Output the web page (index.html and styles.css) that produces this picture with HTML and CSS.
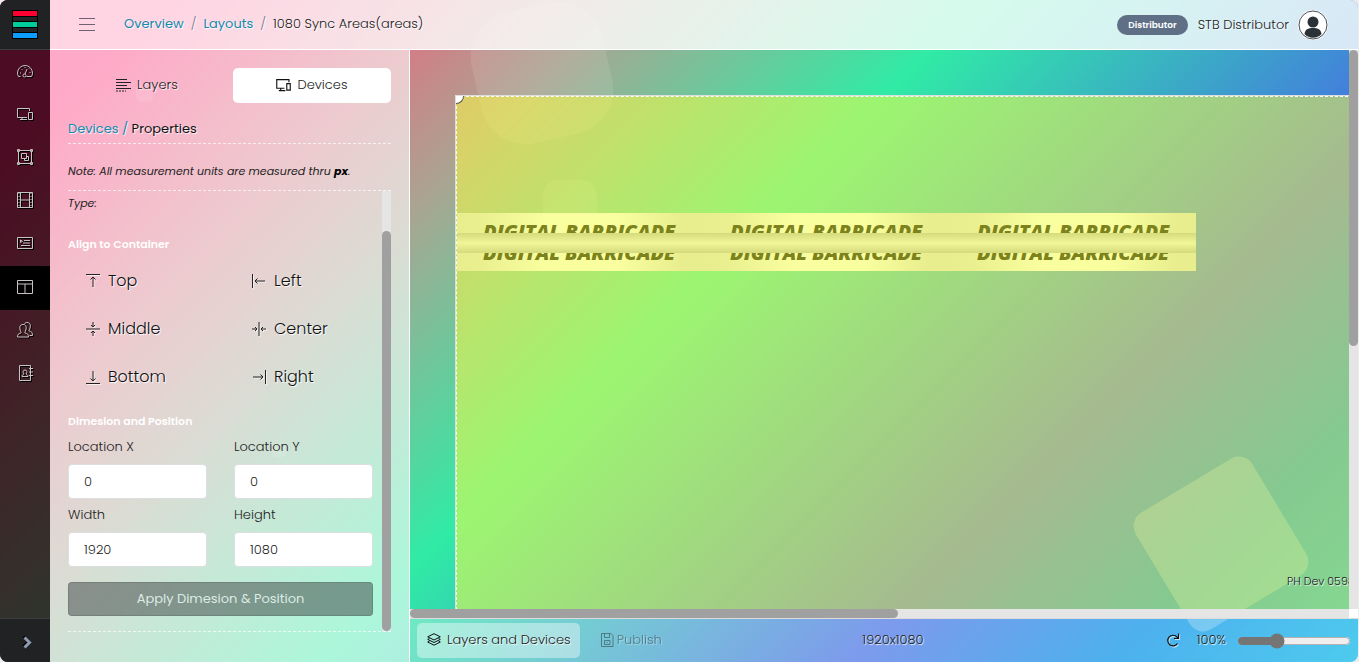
FILE: index.html
```html
<!DOCTYPE html>
<html lang="en">
<head>
<meta charset="utf-8">
<title>1080 Sync Areas(areas)</title>
<link rel="stylesheet" href="styles.css">
</head>
<body>
<div class="app">
  <div class="blobs" aria-hidden="true">
    <span class="blob blob-large"></span>
    <span class="blob blob-small"></span>
    <span class="blob blob-tilted"></span>
    <span class="blob blob-dot"></span>
    <span class="blob blob-dot-low"></span>
  </div>

  <aside class="sidebar">
    <a class="logo" href="#" aria-label="Home">
      <svg width="26" height="29" viewBox="0 0 26 29"><path fill="#000" d="M0 0h26v29H0z"/><path fill="#222426" d="M1 7h24v4H1zM1 18h24v4H1z"/><path fill="#ff0030" d="M1 1h24v5H1z"/><path fill="#00cc9c" d="M1 12h24v5H1z"/><path fill="#0a9dff" d="M1 23h24v5H1z"/></svg>
    </a>
    <nav class="nav">
      <a href="#" aria-label="Dashboard"><svg class="ico" viewBox="0 0 16 16"><path d="M3.5 13.5h-2c-.6-1-1-2.200-1-3.500a7.500 7.500 0 0 1 15 0c0 1.300-.4 2.500-1 3.500h-5"/><circle cx="7.500" cy="12.500" r="1.500"/><path d="M8 11l2-5M3 10h1M4.500 6l.8.8M8 4v1M12.500 9.500h1M11.500 6l.5-.5"/></svg></a>
      <a href="#" aria-label="Devices"><svg class="ico" viewBox="0 0 16 16"><path d="M10 11.500H.5v-9h12V5M5 11.500v2h4M3 13.500h7M11.500 6.500h4v7h-4z"/></svg></a>
      <a href="#" aria-label="Groups"><svg class="ico" viewBox="0 0 16 16"><path d="M1.500 1.500h13v13h-13zM4.500 4.500h5v5h-5zM9.500 7.500h2v4h-4v-2"/><path d="M.5.5h2v2h-2zM13.500.5h2v2h-2zM.5 13.500h2v2h-2zM13.500 13.500h2v2h-2z"/></svg></a>
      <a href="#" aria-label="Media"><svg class="ico" viewBox="0 0 16 16"><path d="M.5.5h15v15H.5zM3.500.5v15M12.500.5v15M3.500 8h9"/><path stroke-dasharray="1 2" d="M2 1v14M14 1v14"/></svg></a>
      <a href="#" aria-label="Playlists"><svg class="ico" viewBox="0 0 16 16"><path d="M.5 2.500h15v11H.5zM7 5.500h6M6 8h7M4 10.500h9M3.500 5v2.500l2-1.200z"/></svg></a>
      <a class="active" href="#" aria-label="Layouts"><svg class="ico" viewBox="0 0 16 16"><path d="M.5 1.500h15v13H.5zM.5 5h15M8 5v9.500"/></svg></a>
      <a href="#" aria-label="Users"><svg class="ico" viewBox="0 0 16 16"><path d="M.5 15c0-2.500.8-3.500 3.500-4 .5-.5 0-1-.5-2C2.500 6.500 2 2.500 6 2.500S9.500 6.500 8.500 9c-.5 1-1 1.500-.5 2 2.700.5 3.500 1.500 3.500 4z"/><path d="M7.500 1.800C8 .8 9 .5 10 .5c4 0 3.700 4 2.700 6.500-.5 1-1 1.500-.5 2 2.500.5 3.300 1.500 3.300 4.500h-3"/></svg></a>
      <a href="#" aria-label="Contacts"><svg class="ico" viewBox="0 0 16 16"><path d="M2.500.5h11v15h-11zM12 3.500h4M12 7h4M12 10.500h4"/><path d="M5 11.500c0-1.500 1-2 2-2.500-1.500-2-1-4 1-4s2.500 2 1 4c1 .5 2 1 2 2.500z"/></svg></a>
    </nav>
    <button class="expand" aria-label="Expand menu"><svg width="9" height="13" viewBox="0 0 9 13"><path d="M1.500 1.500l5 5-5 5" fill="none" stroke="#8f9bb0" stroke-width="3"/></svg></button>
  </aside>

  <header class="topbar">
    <button class="burger" aria-label="Menu"><svg width="16" height="13" viewBox="0 0 16 13"><path d="M0 .5h16M0 6.500h16M0 12.500h16" stroke="#6f6170"/></svg></button>
    <nav class="crumbs"><a href="#">Overview</a><i>/</i><a href="#">Layouts</a><i>/</i><span>1080 Sync Areas(areas)</span></nav>
    <div class="account">
      <span class="role">Distributor</span>
      <span class="user">STB Distributor</span>
      <svg class="avatar" viewBox="0 0 30 30"><circle cx="15" cy="15" r="15" fill="#fff"/><circle cx="15" cy="15" r="14" fill="none" stroke="#4a4f54"/><circle cx="15" cy="12" r="5.500" fill="#2b3237"/><path d="M6.500 24c.5-4.500 3.500-6 8.500-6s8 1.500 8.500 6c-4.500 5-12.500 5-17 0z" fill="#2b3237"/></svg>
    </div>
  </header>

  <section class="panel">
    <div class="tabs">
      <button class="tab"><svg width="15" height="14" viewBox="0 0 15 14"><path d="M0 1.500h11M0 4.500h15M0 7.500h11M0 10.500h15" stroke="#222"/><path d="M0 13h10" stroke="#222" stroke-dasharray="2 1"/></svg>Layers</button>
      <button class="tab selected"><svg width="15" height="14" viewBox="0 0 16 14"><path d="M9 10.500H.8V1.200h13V4M5 10.500v2M3 13h7M11.500 5.500h3.700v7h-3.700z" fill="none" stroke="#111" stroke-width="1.200"/></svg>Devices</button>
    </div>
    <h1 class="panel-crumb"><a href="#">Devices /</a> Properties</h1>
    <p class="note">Note: All measurement units are measured thru <b>px</b>.</p>
    <div class="scroller">
      <form class="form">
        <p class="type">Type:</p>
        <h2>Align to Container</h2>
        <div class="align">
          <button type="button"><svg class="al" viewBox="0 0 14 14"><path d="M0 .5h14M7 13V3M4.500 5.500L7 3l2.500 2.500"/></svg>Top</button>
          <button type="button"><svg class="al" viewBox="0 0 14 14"><path d="M.5 0v14M13 7H3M5.500 4.500L3 7l2.500 2.500"/></svg>Left</button>
          <button type="button"><svg class="al" viewBox="0 0 14 14"><path d="M0 7h14M7 0v5M7 14V9M5 3l2 2 2-2M5 11l2-2 2 2"/></svg>Middle</button>
          <button type="button"><svg class="al" viewBox="0 0 14 14"><path d="M7 0v14M0 7h5M14 7H9M3 5l2 2-2 2M11 5L9 7l2 2"/></svg>Center</button>
          <button type="button"><svg class="al" viewBox="0 0 14 14"><path d="M0 13.500h14M7 1v10M4.500 8.500L7 11l2.500-2.500"/></svg>Bottom</button>
          <button type="button"><svg class="al" viewBox="0 0 14 14"><path d="M13.500 0v14M1 7h10M8.500 4.500L11 7l-2.500 2.500"/></svg>Right</button>
        </div>
        <h2 class="second">Dimesion and Position</h2>
        <div class="fields">
          <div class="field"><label for="lx">Location X</label><input id="lx" type="text" value="0"></div>
          <div class="field"><label for="ly">Location Y</label><input id="ly" type="text" value="0"></div>
          <div class="field"><label for="w">Width</label><input id="w" type="text" value="1920"></div>
          <div class="field"><label for="h">Height</label><input id="h" type="text" value="1080"></div>
        </div>
        <button class="apply" type="button">Apply Dimesion &amp; Position</button>
      </form>
      <div class="track track-panel"><div class="thumb"></div></div>
    </div>
  </section>

  <main class="work">
    <div class="canvas">
      <div class="stage">
        <span class="handle"></span>
        <div class="banner">
          <div class="strip strip-top"><span>DIGITAL BARRICADE</span><span>DIGITAL BARRICADE</span><span>DIGITAL BARRICADE</span></div>
          <div class="fold"></div>
          <div class="strip strip-bottom"><span>DIGITAL BARRICADE</span><span>DIGITAL BARRICADE</span><span>DIGITAL BARRICADE</span></div>
        </div>
        <span class="device">PH Dev 0598</span>
      </div>
    </div>
    <div class="track track-v"><div class="thumb"></div></div>
    <div class="track track-h"><div class="thumb"></div></div>
    <div class="corner"></div>
    <footer class="statusbar">
      <div class="modes">
        <button class="mode on"><svg width="14" height="14" viewBox="0 0 14 14"><path d="M7 .7l6.300 3.100L7 7 .7 3.800zM2.500 5.500L.7 6.400 7 9.500l6.300-3.100-1.800-.9M2.500 8L.7 9 7 12.200 13.300 9l-1.800-1" fill="none" stroke="#111"/></svg>Layers and Devices</button>
        <button class="mode off" disabled><svg width="13" height="14" viewBox="0 0 13 14"><path d="M.5.500h9.500l2 2v11H.5zM3.500.5v4h5v-4M3.500 7.500h5.500v4H3.500zM6 9v1" fill="none" stroke="#222"/></svg>Publish</button>
      </div>
      <span class="size">1920x1080</span>
      <div class="zoom">
        <button class="refresh" aria-label="Reset zoom"><svg width="14" height="14" viewBox="0 0 14 14"><path d="M11.500 10.500A5.300 5.300 0 1 1 11 4l1 1M12.500.5V5.500H8" fill="none" stroke="#111" stroke-width="1.200"/></svg></button>
        <label for="zoom">100%</label>
        <input id="zoom" type="range" min="0" max="100" value="33">
      </div>
    </footer>
  </main>
</div>
</body>
</html>
```

FILE: styles.css
```css
* { box-sizing: border-box; }
html, body { height: 100%; }
body {
  margin: 0;
  padding-right: 1px;
  background: #ededed;
  color: #222;
  font: 300 13px/20px Poppins, Inter, "Open Sans", sans-serif;
}
button, input { font: inherit; color: inherit; }
button { border: 0; padding: 0; background: none; cursor: pointer; }
a { color: #148aac; text-decoration: none; }
h1, h2, p { margin: 0; }

.app {
  position: relative;
  display: grid;
  grid-template: 50px minmax(0, 1fr) / 50px 360px minmax(0, 1fr);
  height: 100%;
  overflow: hidden;
  border-radius: 8px;
  background: linear-gradient(135deg, #ff2a75 8%, #d07f87 23%, #a9a592 31%, #30eba5 48.5%, #456fe4 75%, #0090e7 88%, #00b4e7 100%);
  text-shadow: 1px 1px 1px rgba(255, 255, 255, .9);
}

.blobs { position: absolute; inset: 0; }
.blob { position: absolute; background: rgba(255, 255, 255, .1); }
.blob-large { left: 475px; top: 6px; width: 134px; height: 134px; border-radius: 45px; transform: rotate(-13deg); }
.blob-small { left: 543px; top: 180px; width: 54px; height: 54px; border-radius: 15px; }
.blob-tilted { left: 1153px; top: 476px; width: 136px; height: 136px; border-radius: 16px; transform: rotate(-31deg); background: rgba(255, 255, 255, .25); }
.blob-dot { left: 136px; top: 85px; width: 17px; height: 17px; border-radius: 5px; }
.blob-dot-low { left: 272px; top: 443px; width: 14px; height: 14px; border-radius: 3px; }

.sidebar {
  position: relative;
  grid-row: 1 / 3;
  display: flex;
  flex-direction: column;
  background: rgba(0, 0, 0, .7);
}
.logo {
  display: flex;
  align-items: center;
  justify-content: center;
  height: 50px;
  background: #212224;
  border-bottom: 1px solid #3b3c3e;
}
.nav { flex: 1; display: flex; flex-direction: column; padding-top: 1px; }
.nav a { display: flex; align-items: center; justify-content: center; height: 43px; padding-bottom: 3px; }
.nav .active { height: 44px; background: #000; }
.ico {
  width: 16px;
  height: 16px;
  fill: none;
  stroke: #c9c3c5;
  filter: drop-shadow(1px 1px 0 #000);
}
.expand {
  display: flex;
  align-items: center;
  justify-content: center;
  height: 44px;
  padding: 4px 0 0 4px;
  background: #212224;
  border-top: 1px solid #3b3c3e;
}
.expand svg { filter: drop-shadow(-1px -1px 0 #000); }

.topbar {
  position: relative;
  grid-column: 2 / 4;
  display: flex;
  align-items: center;
  padding: 0 30px 0 29px;
  background: rgba(255, 255, 255, .8);
  border-bottom: 1px solid #fff;
}
.burger { display: flex; margin-right: 29px; }
.crumbs { flex: 1; display: flex; gap: 7px; padding-bottom: 2px; }
.crumbs a { font-weight: 400; }
.crumbs i { font-style: normal; color: #777f8a; }
.account { display: flex; align-items: center; }
.role {
  padding: 0 11px;
  border-radius: 10px;
  background: #5f6f86;
  color: #fff;
  font-size: 9px;
  font-weight: 600;
  text-shadow: none;
}
.user { margin: 0 9px 0 10px; }
.avatar { width: 30px; height: 30px; }

.panel {
  position: relative;
  display: flex;
  flex-direction: column;
  padding: 18px 18px 30px;
  background: rgba(255, 255, 255, .6);
  border-right: 1px solid #fff;
}
.tabs { display: grid; grid-template-columns: 1fr 1fr; gap: 7px; }
.tab {
  display: flex;
  align-items: center;
  justify-content: center;
  gap: 6px;
  height: 35px;
  padding-bottom: 2px;
  border-radius: 5px;
  text-shadow: inherit;
}
.tab.selected { background: #fff; }
.panel-crumb {
  padding: 16px 0 4px;
  border-bottom: 1px dashed rgba(255, 255, 255, .7);
  color: #111;
  font-size: 13px;
  font-weight: 400;
}
.note {
  padding: 17px 0 9px;
  border-bottom: 1px dashed rgba(255, 255, 255, .7);
  font-size: 11px;
  font-style: italic;
  font-weight: 400;
  white-space: nowrap;
  text-shadow: none;
}
.note b { font-weight: 700; color: #000; }
.scroller {
  flex: 1;
  display: flex;
  justify-content: space-between;
  min-height: 0;
  border-bottom: 1px dashed rgba(255, 255, 255, .7);
}
.form { width: 305px; text-shadow: none; }
.type { padding-top: 2px; font-size: 11px; font-style: italic; font-weight: 400; }
h2 { margin-top: 21px; color: #fff; font-size: 11px; font-weight: 600; }
h2.second { margin-top: 10px; }
.align { display: grid; grid-template-columns: 166px 1fr; padding-top: 3px; }
.align button {
  display: flex;
  align-items: center;
  gap: 8px;
  height: 48px;
  padding-left: 18px;
  font-size: 16px;
  color: #111;
  text-shadow: 1px 1px 1px #fff;
}
.al { width: 14px; height: 14px; fill: none; stroke: #222; filter: drop-shadow(1px 1px 0 rgba(255, 255, 255, .7)); }
.fields { display: grid; grid-template-columns: 1fr 1fr; gap: 6px 27px; padding-top: 6px; }
.field { display: flex; flex-direction: column; gap: 7px; min-width: 0; }
.field input {
  width: 100%;
  height: 35px;
  padding: 0 15px;
  border: 1px solid #dcdfe0;
  border-radius: 4px;
  background: #fff;
}
.apply {
  width: 100%;
  height: 34px;
  margin-top: 15px;
  border: 1px solid rgba(0, 0, 0, .12);
  border-radius: 4px;
  background: rgba(60, 65, 65, .5);
  color: #dcebe3;
  font-weight: 400;
}

.track { background: #e5e5e5; }
.thumb { background: #a0a0a0; border-radius: 5px; }
.track-panel { width: 9px; padding-top: 40px; }
.track-panel .thumb { height: 100%; }
.track-v .thumb { height: 53%; }
.track-h .thumb { width: 52%; height: 100%; }

.work {
  position: relative;
  display: grid;
  grid-template: minmax(0, 1fr) 9px 44px / minmax(0, 1fr) 9px;
}
.canvas { overflow: hidden; padding: 45px; }
.corner { background: #fff; }

.stage {
  position: relative;
  width: 1728px;
  height: 972px;
  border: 1px solid #dedede;
  background: rgba(255, 255, 65, .52);
}
.stage::before { content: ""; position: absolute; inset: 0; border: 1px dashed #fff; }
.handle {
  position: absolute;
  left: 0;
  top: 0;
  width: 8px;
  height: 8px;
  background: #fff;
  border: solid #555;
  border-width: 0 1px 1px 0;
  border-radius: 0 0 8px 0;
}
.banner {
  position: absolute;
  left: 1px;
  top: 117px;
  width: 739px;
  background: repeating-linear-gradient(90deg, #e8ee8d 0, #eaf08f 25px, #f9ff9e 90px, #f9ff9e 160px, #e8ee8d 225px, #e8ee8d 247px);
  color: #7d831c;
  font: italic 800 20px/20px "Open Sans", sans-serif;
  text-shadow: none;
}
.strip { display: grid; grid-template-columns: repeat(3, 247px); overflow: hidden; padding-left: 26px; white-space: nowrap; }
.strip-top { height: 20px; padding-top: 9px; }
.strip-bottom { height: 18px; align-content: end; padding-bottom: 8px; }
.fold { height: 20px; background: linear-gradient(#d5da7d, #f1f697 50%, #d5da7d); }
.device { position: absolute; left: 831px; top: 475px; font-size: 11px; }

.statusbar {
  grid-column: 1 / 3;
  display: grid;
  grid-template-columns: 1fr auto 1fr;
  align-items: center;
  padding: 0 7px;
  background: rgba(255, 255, 255, .3);
  border-top: 1px solid #dcdcdc;
}
.modes, .zoom { display: flex; align-items: center; }
.modes { gap: 11px; }
.mode { display: flex; align-items: center; gap: 6px; height: 35px; padding: 0 9px 2px 10px; border-radius: 5px; text-shadow: inherit; }
.mode.on { background: rgba(255, 255, 255, .4); }
.mode.off { gap: 3px; opacity: .45; }
.size { padding: 0 0 2px 18px; }
.zoom { justify-content: flex-end; }
.zoom label { padding-bottom: 2px; }
.refresh { display: flex; margin-right: 17px; padding-bottom: 2px; filter: drop-shadow(1px 1px 0 rgba(255, 255, 255, .7)); }
.zoom input { width: 114px; height: 16px; margin: 0 0 0 11px; accent-color: #757575; }
```
